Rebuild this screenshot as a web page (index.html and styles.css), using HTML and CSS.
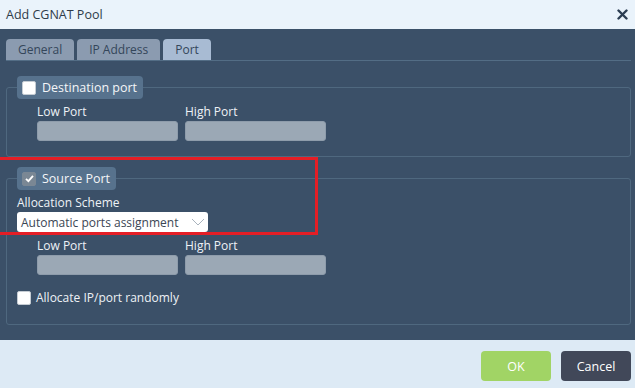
FILE: index.html
```html
<!DOCTYPE html>
<html lang="en">
<head>
    <meta charset="UTF-8">
    <meta name="viewport" content="width=device-width, initial-scale=1.0">
    <title>Add CGNAT Pool</title>
    <link rel="stylesheet" href="styles.css">
</head>
<body>
    <div class="dialog">
        <div class="titlebar">
            <span class="title">Add CGNAT Pool</span>
            <svg class="close" width="11" height="11" viewBox="0 0 11 11">
                <path d="M1.5 1.5 L9.5 9.5 M9.5 1.5 L1.5 9.5" stroke="#2b3d52" stroke-width="2.4" stroke-linecap="round"/>
            </svg>
        </div>

        <div class="content">
            <div class="tabs">
                <div class="tab">General</div>
                <div class="tab">IP Address</div>
                <div class="tab active">Port</div>
            </div>

            <fieldset class="group group-dest">
                <legend>
                    <span class="check"></span>
                    Destination port
                </legend>
                <div class="ports">
                    <div class="field">
                        <label>Low Port</label>
                        <div class="input"></div>
                    </div>
                    <div class="field">
                        <label>High Port</label>
                        <div class="input"></div>
                    </div>
                </div>
            </fieldset>

            <fieldset class="group group-src">
                <legend>
                    <span class="check checked">
                        <svg width="11" height="11" viewBox="0 0 11 11">
                            <path d="M2 5.8 L4.4 8.2 L9 2.8" fill="none" stroke="#fff" stroke-width="1.8"/>
                        </svg>
                    </span>
                    Source Port
                </legend>
                <label class="scheme-label">Allocation Scheme</label>
                <div class="select">
                    <span>Automatic ports assignment</span>
                    <svg width="14" height="8" viewBox="0 0 14 8">
                        <path d="M1 1 L7 7 L13 1" fill="none" stroke="#a9b3bd" stroke-width="1"/>
                    </svg>
                </div>
                <div class="ports">
                    <div class="field">
                        <label>Low Port</label>
                        <div class="input"></div>
                    </div>
                    <div class="field">
                        <label>High Port</label>
                        <div class="input"></div>
                    </div>
                </div>
                <div class="random">
                    <span class="check"></span>
                    Allocate IP/port randomly
                </div>
            </fieldset>
        </div>

        <div class="footer">
            <button class="btn btn-ok">OK</button>
            <button class="btn btn-cancel">Cancel</button>
        </div>

        <!-- highlight annotation -->
        <div class="highlight"></div>
    </div>
</body>
</html>
```

FILE: styles.css
```css
body {
    margin: 0;
    font-family: "Open Sans", "DejaVu Sans", sans-serif;
    font-size: 12px;
}
.dialog {
    position: relative;
    width: 635px;
    height: 388px;
    display: flex;
    flex-direction: column;
    overflow: hidden;
}
.titlebar {
    height: 29px;
    flex: none;
    display: flex;
    align-items: center;
    justify-content: space-between;
    padding: 0 4px 0 6px;
    background-color: #eaf3fb;
    color: #2e3b4a;
}
.title {
    font-size: 12.5px;
}
.close {
    margin-right: 3px;
}
.content {
    flex: 1;
    background-color: #3b5068;
    padding: 10px 4px 0 6px;
    color: #eef2f6;
}
.tabs {
    display: flex;
    gap: 3px;
    height: 21px;
    border-bottom: 1px solid #536d85;
}
.tab {
    height: 21px;
    line-height: 22px;
    padding: 0 12px;
    border-radius: 4px 4px 0 0;
    background-color: #8b9bb0;
    color: #34465a;
}
.tab.active {
    background-color: #a8bbd3;
}
.group {
    margin: 0;
    border: 1px solid #4f687f;
    border-radius: 3px;
    padding: 0 10px;
}
.group-dest {
    margin-top: 15px;
    padding-bottom: 15px;
}
.group-src {
    margin-top: 10px;
    padding-bottom: 18px;
}
.group legend {
    display: flex;
    align-items: center;
    gap: 6px;
    height: 23px;
    padding: 0 6px 0 5px;
    box-sizing: border-box;
    background-color: #57728d;
    border-radius: 4px;
    color: #f4f6f8;
    font-size: 12.5px;
}
.check {
    width: 12px;
    height: 12px;
    background-color: #fff;
    border: 1px solid #c5ccd3;
    border-radius: 2px;
    display: flex;
    align-items: center;
    justify-content: center;
    flex: none;
}
.check.checked {
    background-color: #7a8794;
    border-color: #7a8794;
}
.ports {
    display: flex;
    gap: 7px;
    padding-left: 20px;
}
.group-dest .ports {
    margin-top: 4px;
}
.group-src .ports {
    margin-top: 5px;
}
.field label {
    display: block;
    line-height: 18px;
    color: #eef2f6;
}
.input {
    width: 141px;
    height: 20px;
    box-sizing: border-box;
    background-color: #9ba8b5;
    border: 1px solid #8e9cab;
    border-radius: 3px;
}
.scheme-label {
    display: block;
    margin-top: 4px;
    line-height: 18px;
}
.select {
    width: 191px;
    height: 20px;
    box-sizing: border-box;
    background-color: #fff;
    border-radius: 3px;
    display: flex;
    align-items: center;
    justify-content: space-between;
    padding: 0 3px 0 4px;
    color: #3b4654;
    white-space: nowrap;
}
.random {
    display: flex;
    align-items: center;
    gap: 5px;
    margin-top: 14px;
    color: #eef2f6;
}
.footer {
    height: 48px;
    flex: none;
    background-color: #ddeaf5;
    display: flex;
    justify-content: flex-end;
    align-items: flex-start;
    gap: 10px;
    padding: 11px 4px 0 0;
    box-sizing: border-box;
}
.btn {
    width: 70px;
    height: 30px;
    border: none;
    border-radius: 4px;
    font-family: inherit;
    font-size: 12.5px;
    color: #fff;
}
.btn-ok {
    background-color: #a1d465;
}
.btn-cancel {
    background-color: #414859;
}
.highlight {
    position: absolute;
    left: -3px;
    top: 157px;
    width: 321px;
    height: 78px;
    box-sizing: border-box;
    border: 3px solid #e41e26;
    pointer-events: none;
}
```
